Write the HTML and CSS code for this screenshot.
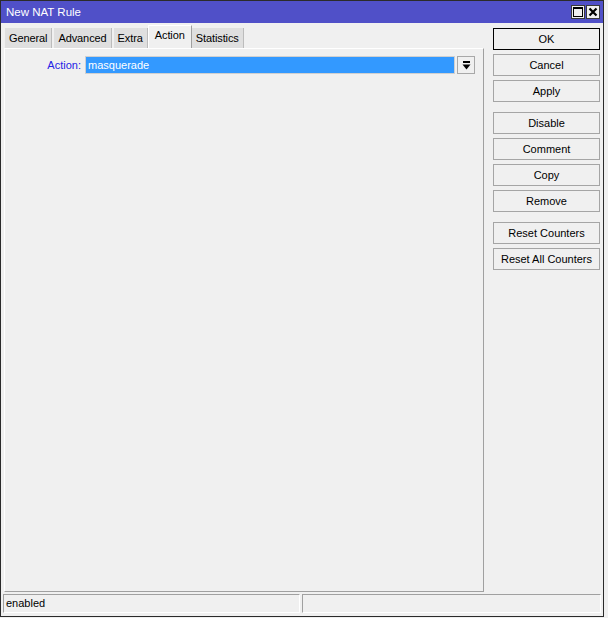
FILE: index.html
```html
<!DOCTYPE html>
<html lang="en">
<head>
    <meta charset="UTF-8">
    <title>New NAT Rule</title>
    <link rel="stylesheet" href="styles.css">
</head>
<body>

<div class="window">
    <div class="titlebar">
        <span class="title">New NAT Rule</span>
        <div class="title-btns">
            <span class="tbtn">
                <svg width="12" height="12" viewBox="0 0 12 12"><rect x="1.5" y="1.5" width="9" height="9" fill="none" stroke="#000" stroke-width="1"/><rect x="1" y="1" width="10" height="2" fill="#000"/></svg>
            </span>
            <span class="tbtn">
                <svg width="12" height="12" viewBox="0 0 12 12"><path d="M2.5 2.5 L9.5 9.5 M9.5 2.5 L2.5 9.5" stroke="#000" stroke-width="2.2"/></svg>
            </span>
        </div>
    </div>

    <div class="main">
        <div class="left">
            <div class="tabs">
                <div class="tab">General</div>
                <div class="tab">Advanced</div>
                <div class="tab">Extra</div>
                <div class="tab active">Action</div>
                <div class="tab">Statistics</div>
            </div>
            <div class="panel">
                <div class="field">
                    <label class="field-label">Action:</label>
                    <div class="select">masquerade</div>
                    <div class="drop">
                        <svg width="11" height="11" viewBox="0 0 11 11"><rect x="2" y="1" width="7" height="2" fill="#000"/><path d="M1.5 4.5 H9.5 L5.5 9.5 Z" fill="#000"/></svg>
                    </div>
                </div>
            </div>
        </div>

        <div class="buttons">
            <div class="group">
                <div class="btn default">OK</div>
                <div class="btn">Cancel</div>
                <div class="btn">Apply</div>
            </div>
            <div class="group">
                <div class="btn">Disable</div>
                <div class="btn">Comment</div>
                <div class="btn">Copy</div>
                <div class="btn">Remove</div>
            </div>
            <div class="group">
                <div class="btn">Reset Counters</div>
                <div class="btn">Reset All Counters</div>
            </div>
        </div>
    </div>

    <div class="statusbar">
        <div class="status first">enabled</div>
        <div class="status second"></div>
    </div>
</div>

</body>
</html>
```

FILE: styles.css
```css
body {
    margin: 0;
    background: #f0f0f0;
    font-family: "Liberation Sans", Arial, sans-serif;
    font-size: 11px;
    color: #000;
}

.window {
    width: 602px;
    height: 615px;
    border: 1px solid #2b2b2b;
    background: #f0f0f0;
    display: flex;
    flex-direction: column;
}

.titlebar {
    height: 22px;
    background: #5050c8;
    color: white;
    display: flex;
    align-items: center;
    justify-content: space-between;
    padding: 0 3px 0 5px;
    font-size: 11.5px;
}
.title-btns { display: flex; gap: 1px; }
.tbtn {
    width: 12px;
    height: 12px;
    border: 1px solid #3a3a3a;
    background: #f0f0f0;
    display: flex;
}

.main {
    flex: 1;
    display: flex;
    padding: 2px 3px 0 3px;
}

.left {
    width: 480px;
    display: flex;
    flex-direction: column;
}

.tabs {
    height: 23px;
    display: flex;
    align-items: flex-end;
    padding-left: 1px;
    letter-spacing: -0.1px;
}
.tab {
    height: 20px;
    line-height: 20px;
    padding: 0 4px;
    margin-right: 2px;
    background: #dfdfdf;
    border-right: 1px solid #bcbcbc;
}
.tab.active {
    height: 22px;
    line-height: 19px;
    padding: 0 6px;
    margin-left: -2px;
    margin-right: 0;
    background: #f0f0f0;
    border-top: 1px solid #ffffff;
    border-left: 1px solid #ffffff;
    border-right: 1px solid #a0a0a0;
}

.panel {
    flex: 1;
    border-top: 1px solid #ffffff;
    border-left: 1px solid #ffffff;
    border-right: 1px solid #a0a0a0;
    border-bottom: 1px solid #a0a0a0;
    padding: 7px 8px 0 0;
}

.field {
    display: flex;
    height: 18px;
}
.field-label {
    width: 76px;
    text-align: right;
    color: #2323e6;
    line-height: 18px;
    margin-right: 4px;
}
.select {
    flex: 1;
    background: #3399ff;
    color: white;
    border: 1px solid #d0d0d0;
    line-height: 16px;
    padding-left: 2px;
}
.drop {
    width: 16px;
    height: 16px;
    margin-left: 2px;
    border: 1px solid #a8a8a8;
    display: flex;
    align-items: center;
    justify-content: center;
}

.buttons {
    width: 107px;
    margin-left: 9px;
    padding-top: 3px;
    display: flex;
    flex-direction: column;
    gap: 10px;
}
.group {
    display: flex;
    flex-direction: column;
    gap: 4px;
}
.btn {
    height: 20px;
    line-height: 20px;
    text-align: center;
    border: 1px solid #a5a5a5;
    background: #f0f0f0;
}
.btn.default { border-color: #000; }

.statusbar {
    height: 19px;
    margin: 2px 2px 3px 2px;
    display: flex;
    gap: 2px;
}
.status {
    border-top: 1px solid #a0a0a0;
    border-left: 1px solid #a0a0a0;
    border-bottom: 1px solid #ffffff;
    border-right: 1px solid #ffffff;
    line-height: 17px;
    padding-left: 2px;
}
.status.first { width: 293px; }
.status.second { flex: 1; }
```
